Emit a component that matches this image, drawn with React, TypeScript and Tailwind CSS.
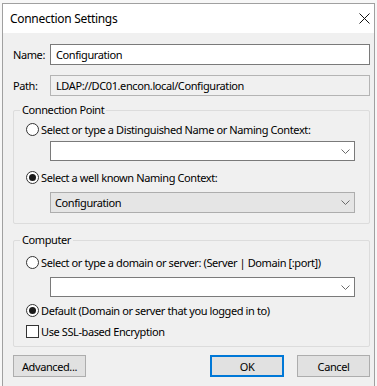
import React from "react";

const font = { fontFamily: '"Noto Sans", "Liberation Sans", sans-serif' };

function Chevron() {
  return (
    <svg width="9" height="5" viewBox="0 0 9 5" className="shrink-0">
      <path d="M0.5 0.5 L4.5 4.5 L8.5 0.5" fill="none" stroke="#6a6a6a" strokeWidth="1" />
    </svg>
  );
}

function Radio({ checked, label }: { checked?: boolean; label: string }) {
  return (
    <div className="flex h-[15px] items-center">
      <span className="flex h-[13px] w-[13px] shrink-0 items-center justify-center rounded-full border border-[#333] bg-white">
        {checked && <span className="h-[7px] w-[7px] rounded-full bg-[#1a1a1a]" />}
      </span>
      <span className="ml-[2px] whitespace-nowrap">{label}</span>
    </div>
  );
}

function Combo({ value, readOnly }: { value?: string; readOnly?: boolean }) {
  return (
    <div
      className={
        readOnly
          ? "ml-[24px] flex h-[21px] w-[305px] items-center justify-between border border-[#adadad] bg-[#e5e5e5] pl-[4px] pr-[4px]"
          : "ml-[24px] flex h-[20px] w-[305px] items-center justify-between border border-[#7a7a7a] bg-white pl-[4px] pr-[4px]"
      }
    >
      <span>{value}</span>
      <Chevron />
    </div>
  );
}

function Group({ title, top, children }: { title: string; top: string; children: React.ReactNode }) {
  return (
    <div className={"relative w-[357px] rounded-[2px] border border-[#dcdcdc] pl-[12px] " + top}>
      <span className="absolute left-[6px] top-[-9px] bg-[#f0f0f0] px-[2px] leading-[16px]">{title}</span>
      {children}
    </div>
  );
}

function Button({ label, primary }: { label: string; primary?: boolean }) {
  return (
    <div
      className={
        primary
          ? "flex h-[22px] w-[74px] items-center justify-center border-2 border-[#0078d7] bg-[#e1e1e1]"
          : "flex h-[22px] w-[73px] items-center justify-center border border-[#adadad] bg-[#e1e1e1]"
      }
    >
      {label}
    </div>
  );
}

export default function App() {
  return (
    <div
      className="h-[386px] w-[377px] overflow-hidden bg-[#f7f7f7] pl-[2px] pt-[3px] text-[11px] leading-[15px] tracking-[-0.4px] text-black"
      style={font}
    >
      <div className="h-[390px] w-[373px] border border-[#a0a0a0] bg-[#f0f0f0]">
        <div className="flex h-[29px] items-center justify-between bg-white pl-[7px] pr-[4px]">
          <span className="text-[12px] tracking-[-0.3px]">Connection Settings</span>
          <svg width="11" height="11" viewBox="0 0 11 11">
            <path d="M0.5 0.5 L10.5 10.5 M10.5 0.5 L0.5 10.5" stroke="#111" strokeWidth="1" />
          </svg>
        </div>

        <div className="pl-[10px] pt-[11px]">
          <div className="flex h-[21px] items-center">
            <span className="w-[37px]">Name:</span>
            <div className="flex h-[21px] w-[320px] items-center border border-[#7a7a7a] bg-white pl-[5px]">Configuration</div>
          </div>
          <div className="mt-[10px] flex h-[21px] items-center">
            <span className="w-[37px]">Path:</span>
            <div className="flex h-[21px] w-[320px] items-center border border-[#b4b4b4] bg-[#f0f0f0] pl-[5px]">
              LDAP://DC01.encon.local/Configuration
            </div>
          </div>

          <div className="mt-[14px]">
            <Group title="Connection Point" top="pt-[11px] pb-[10px]">
              <Radio label="Select or type a Distinguished Name or Naming Context:" />
              <div className="mt-[4px]">
                <Combo />
              </div>
              <div className="mt-[9px]">
                <Radio checked label="Select a well known Naming Context:" />
              </div>
              <div className="mt-[7px]">
                <Combo readOnly value="Configuration" />
              </div>
            </Group>
          </div>

          <div className="mt-[16px]">
            <Group title="Computer" top="pt-[14px] pb-[7px]">
              <Radio label="Select or type a domain or server: (Server | Domain [:port])" />
              <div className="mt-[7px]">
                <Combo />
              </div>
              <div className="mt-[6px]">
                <Radio checked label="Default (Domain or server that you logged in to)" />
              </div>
              <div className="mt-[6px] flex h-[15px] items-center">
                <span className="h-[13px] w-[13px] shrink-0 border border-[#333] bg-white" />
                <span className="ml-[2px]">Use SSL-based Encryption</span>
              </div>
            </Group>
          </div>

          <div className="mt-[8px] flex w-[357px] items-center">
            <Button label="Advanced..." />
            <div className="ml-auto">
              <Button primary label="OK" />
            </div>
            <div className="ml-[13px]">
              <Button label="Cancel" />
            </div>
          </div>
        </div>
      </div>
    </div>
  );
}
